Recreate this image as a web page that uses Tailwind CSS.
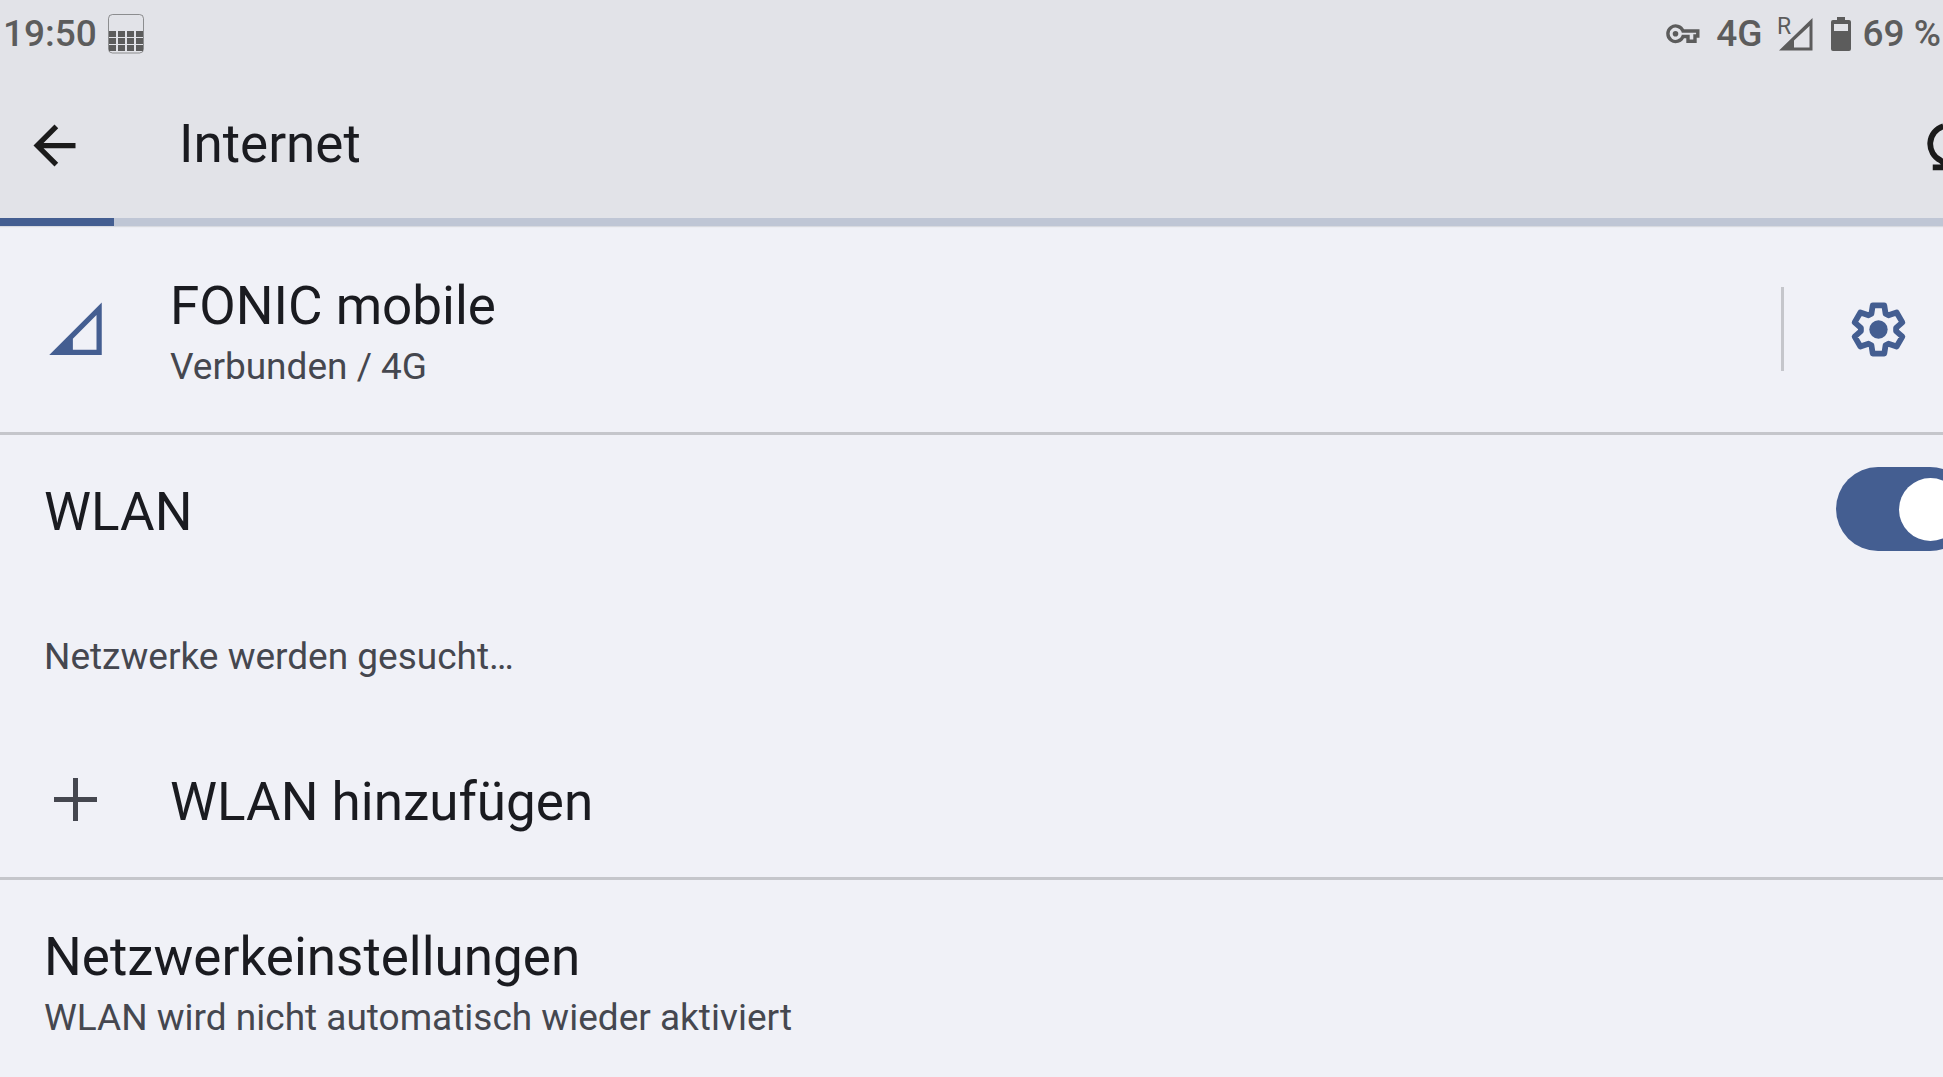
<!DOCTYPE html>
<html lang="de">
<head>
  <meta charset="UTF-8" />
  <meta name="viewport" content="width=device-width, initial-scale=1.0"/>
  <title>Internet</title>
  <script src="https://cdn.jsdelivr.net/npm/@tailwindcss/browser@4"></script>
</head>
<body class="min-h-screen overflow-x-hidden bg-[#f0f1f7] font-[Roboto,sans-serif] text-[#1a1b20]">

  <header class="overflow-hidden bg-[#e2e3e8]">
    <!-- Statusleiste -->
    <div class="flex h-[68px] items-center justify-between pl-[3px] pr-0.5 text-[37px] font-medium text-[#5c5c5c]">
      <div class="flex items-center gap-[11px]">
        <span>19:50</span>
        <svg class="h-10 w-9" viewBox="0 0 36 40" fill="currentColor">
          <rect x="0.5" y="0.5" width="35" height="38.5" rx="4" fill="none" stroke="currentColor" stroke-width="0.8" opacity="0.8"/>
          <path d="M1 17h7v6H1zM10 17h7v6h-7zM19 17h7v6h-7zM28 17h7v6h-7zM1 24h7v6H1zM10 24h7v6h-7zM19 24h7v6h-7zM28 24h7v6h-7zM1 31h7v6H1zM10 31h7v6h-7zM19 31h7v6h-7zM28 31h7v6h-7z"/>
        </svg>
      </div>
      <div class="flex items-center">
        <svg class="mr-4 h-5 w-[34px]" viewBox="0 0 34 20" fill="none" stroke="currentColor" stroke-width="3.4">
          <path d="M17 7H31.8V12H29V17.3H22V12.5H17A7.8 7.8 0 1 1 17 7Z"/>
          <circle cx="9.5" cy="9.7" r="2.8" fill="currentColor" stroke="none"/>
        </svg>
        <span class="mr-[15px]">4G</span>
        <svg class="mr-[18px] h-[34px] w-[35px] overflow-visible" viewBox="0 0 35 34">
          <path fill="currentColor" fill-rule="evenodd" d="M1 33.5L34.5 1V33.5ZM16 30.5H31.5V9L16 23.5Z"/>
          <text x="-1" y="17" font-size="23" font-weight="400" fill="currentColor">R</text>
        </svg>
        <svg class="mr-3 h-[34px] w-5" viewBox="0 0 20 34">
          <path fill="currentColor" fill-rule="evenodd" d="M6 0h8v3h4a2 2 0 0 1 2 2v27a2 2 0 0 1-2 2H2a2 2 0 0 1-2-2V5a2 2 0 0 1 2-2h4zM3 7v7h14V7z"/>
        </svg>
        <span>69 %</span>
      </div>
    </div>

    <!-- App-Leiste -->
    <div class="flex h-[150px] items-center pt-1">
      <button aria-label="Zurück" class="ml-[23px] mr-[93px]">
        <svg class="h-[63px] w-[63px]" viewBox="0 0 24 24" fill="#1b1b1b"><path d="M20 11H7.83l5.59-5.59L12 4l-8 8 8 8 1.41-1.41L7.83 13H20v-2z"/></svg>
      </button>
      <h1 class="flex-1 text-[53px]">Internet</h1>
      <button aria-label="Aktualisieren" class="-mr-[37px]">
        <svg class="h-[63px] w-[63px]" viewBox="0 0 24 24" fill="none" stroke="#1b1b1b" stroke-width="2.2">
          <path d="M10 4.7A7 7 0 0 0 9 17.7L11 19.5M6 20.3H11.5V15M14 18.1A7 7 0 0 0 15 5.1L13 3.3M18 2.5H12.5V8"/>
        </svg>
      </button>
    </div>
  </header>

  <div role="progressbar" aria-label="Netzwerksuche" class="h-2 bg-[#bfc6d5] shadow-[0_1px_1px_#d8dae0]">
    <div class="h-full w-[114px] bg-[#445e91]"></div>
  </div>

  <main class="overflow-hidden">
    <section class="flex h-[209px] items-center border-b-3 border-[#c5c6cb] pl-11">
      <svg class="mr-[63px] h-[63px] w-[63px]" viewBox="0 0 24 24" fill="#445e91"><path fill-rule="evenodd" d="M2 21.7L22 1.7V21.7ZM11 19.7H20V6.5L11 15.5Z"/></svg>
      <div class="flex-1 pt-3.5">
        <h2 class="text-[53px] leading-[62px]">FONIC mobile</h2>
        <p class="text-[37px] leading-[60px] text-[#45474f]">Verbunden / 4G</p>
      </div>
      <div class="mr-[63px] h-[84px] w-[3px] bg-[#c5c6cb]"></div>
      <button aria-label="Einstellungen" class="mr-[33px]">
        <svg class="h-[63px] w-[63px]" viewBox="-12 -12 24 24" fill="none" stroke="#445e91" stroke-width="2.2" stroke-linejoin="round">
          <path d="M-2.7-6L-2.2-9.2H2.2L2.7-6L3.8-5.4L6.9-6.5L9.1-2.7L6.7-.6V.6L9.1 2.7L6.9 6.5L3.8 5.4L2.7 6L2.2 9.2H-2.2L-2.7 6L-3.8 5.4L-6.9 6.5L-9.1 2.7L-6.7.6V-.6L-9.1-2.7L-6.9-6.5L-3.8-5.4Z"/>
          <circle r="3.5" fill="#445e91" stroke="none"/>
        </svg>
      </button>
    </section>

    <section class="flex h-[148px] items-center justify-between pl-11">
      <label for="wlan" class="pt-2 text-[53px]">WLAN</label>
      <input id="wlan" type="checkbox" role="switch" checked class="-mr-[29px] h-[84px] w-[136px] appearance-none rounded-full bg-[#445e91] before:ml-[63px] before:mt-[11px] before:block before:size-[63px] before:rounded-full before:bg-white">
    </section>

    <p class="flex h-[147px] items-center pl-11 text-[37px] text-[#45474f]">Netzwerke werden gesucht…</p>

    <button class="flex h-[150px] w-full items-center border-b-3 border-[#c5c6cb] pb-0.5 pl-11 text-left text-[53px]">
      <svg class="mr-[63px] h-[63px] w-[63px]" viewBox="0 0 63 63" fill="#45474f"><path d="M10 26H29V7H34V26H53V31H34V50H29V31H10Z"/></svg>
      WLAN hinzufügen
    </button>

    <section class="pl-11 pt-[46px]">
      <h2 class="text-[53px] leading-[62px]">Netzwerkeinstellungen</h2>
      <p class="text-[37px] leading-[60px] text-[#45474f]">WLAN wird nicht automatisch wieder aktiviert</p>
    </section>
  </main>

</body>
</html>
